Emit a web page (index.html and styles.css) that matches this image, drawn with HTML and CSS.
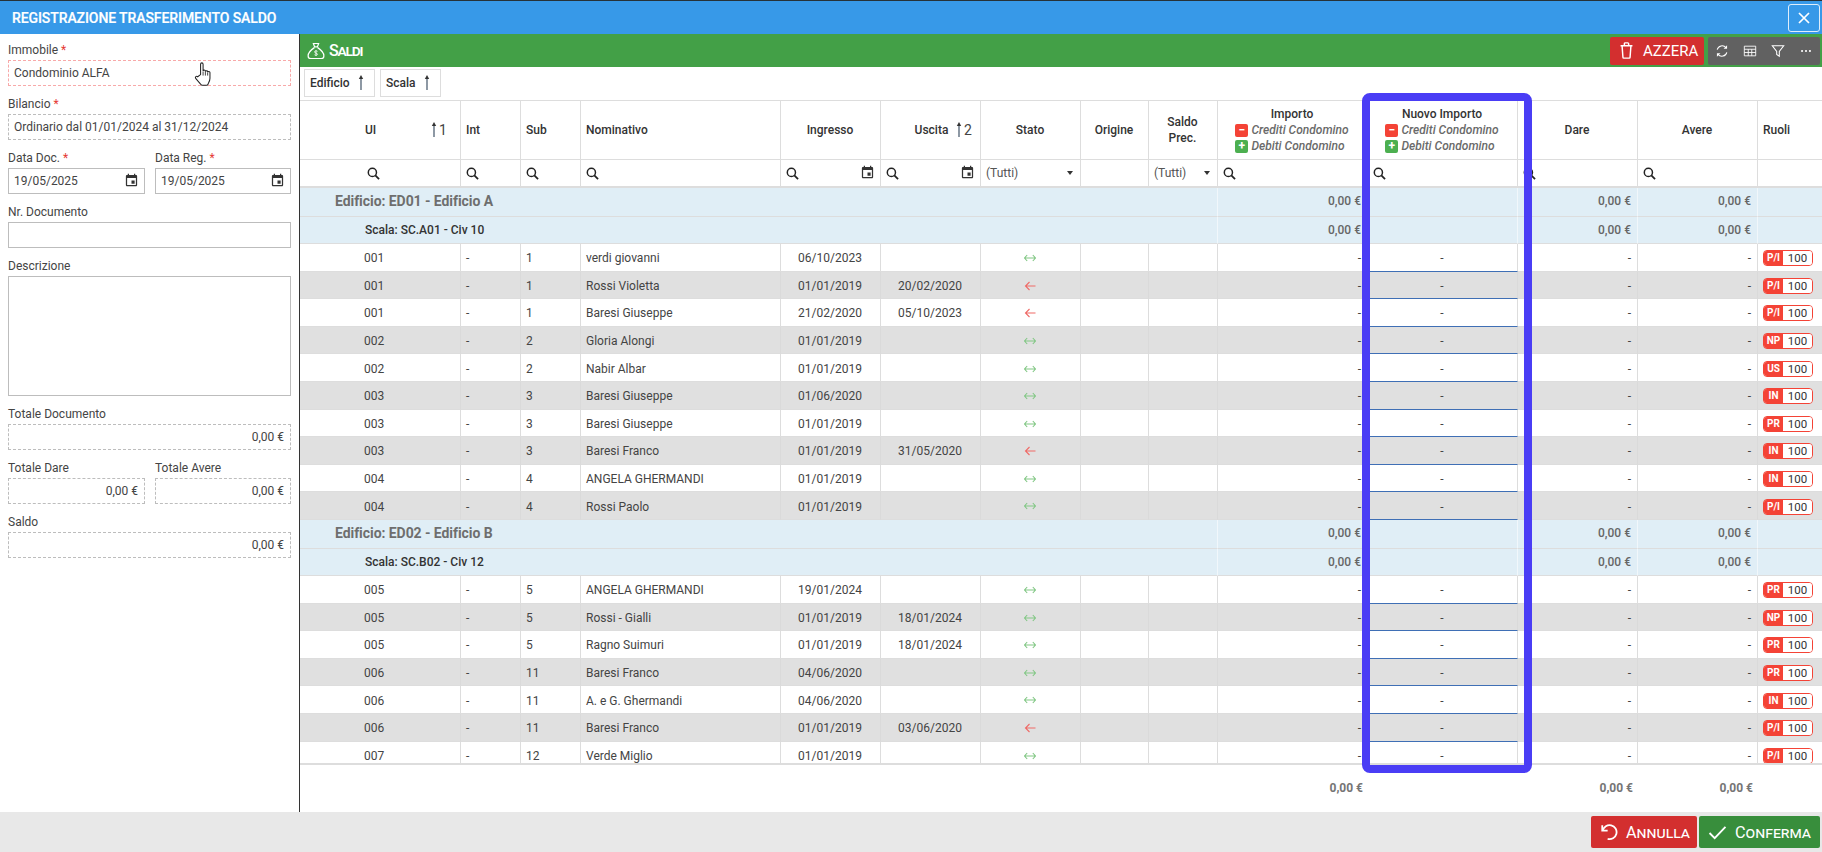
FILE: index.html
```html
<!DOCTYPE html>
<html lang="it">
<head>
<meta charset="utf-8">
<title>Registrazione trasferimento saldo</title>
<link rel="stylesheet" href="styles.css">
</head>
<body>
<svg class="defs" xmlns="http://www.w3.org/2000/svg">
  <symbol id="i-search" viewBox="0 0 14 14"><circle cx="5.8" cy="5.8" r="4.4" fill="none" stroke="currentColor" stroke-width="1.6"/><path d="M9 9l4 4" stroke="currentColor" stroke-width="1.9" fill="none"/></symbol>
  <symbol id="i-cal" viewBox="0 0 24 24"><path fill="currentColor" d="M17 12h-5v5h5v-5zM16 1v2H8V1H6v2H5c-1.11 0-1.99.9-1.99 2L3 19c0 1.1.89 2 2 2h14c1.1 0 2-.9 2-2V5c0-1.1-.9-2-2-2h-1V1h-2zm3 18H5V8h14v11z"/></symbol>
  <symbol id="i-both" viewBox="0 0 12 8"><path d="M.5 4h11M3.200 1L.5 4l2.700 3M8.800 1l2.700 3-2.700 3" fill="none" stroke="#81c784" stroke-width="1.100"/></symbol>
  <symbol id="i-left" viewBox="0 0 12 10"><path d="M1.500 5h10M5.500 1L1.500 5l4 4" fill="none" stroke="#ef6a66" stroke-width="1.100"/></symbol>
  <symbol id="i-up" viewBox="0 0 6 16"><path d="M3 15V2" stroke="#5d6d7e" stroke-width="1.400" fill="none"/><path d="M3 0L5.200 4H.8z" fill="#333"/></symbol>
</svg>

<div class="app">
  <header class="titlebar">
    <h1 class="title">REGISTRAZIONE TRASFERIMENTO SALDO</h1>
    <button class="close" type="button" aria-label="Chiudi">
      <svg class="close-ic" viewBox="0 0 12 12"><path d="M1 1l10 10M11 1L1 11" stroke="#fff" stroke-width="1.700" fill="none"/></svg>
    </button>
  </header>

  <div class="main">
    <aside class="form">
      <div class="field"><div class="lbl">Immobile <span class="req">*</span></div><div class="inp dash-red">Condominio ALFA</div></div>
      <div class="field"><div class="lbl">Bilancio <span class="req">*</span></div><div class="inp dash">Ordinario dal 01/01/2024 al 31/12/2024</div></div>
      <div class="two">
        <div class="field"><div class="lbl">Data Doc. <span class="req">*</span></div><div class="inp solid date">19/05/2025<svg class="cal"><use href="#i-cal"/></svg></div></div>
        <div class="field"><div class="lbl">Data Reg. <span class="req">*</span></div><div class="inp solid date">19/05/2025<svg class="cal"><use href="#i-cal"/></svg></div></div>
      </div>
      <div class="field"><div class="lbl">Nr. Documento</div><div class="inp solid"></div></div>
      <div class="field"><div class="lbl">Descrizione</div><div class="inp solid area"></div></div>
      <div class="field"><div class="lbl">Totale Documento</div><div class="inp dash num">0,00 €</div></div>
      <div class="two">
        <div class="field"><div class="lbl">Totale Dare</div><div class="inp dash num">0,00 €</div></div>
        <div class="field"><div class="lbl">Totale Avere</div><div class="inp dash num">0,00 €</div></div>
      </div>
      <div class="field"><div class="lbl">Saldo</div><div class="inp dash num">0,00 €</div></div>
      <svg class="hand" viewBox="0 0 18 24"><path d="M6.200 13V3c0-1.600 2.400-1.600 2.400 0v6.600c0-1.300 2.200-1.300 2.200 0v.6c0-1.200 2.200-1.200 2.200 0v.7c0-1.100 2.200-1.100 2.200.2v5.400c0 2.800-1.400 4.300-1.900 5.800-.2.6-.5.9-1.200.9H7.800c-.7 0-1.100-.3-1.500-.9-1.200-1.800-3-3.300-4.800-5.600-.9-1.200.6-2.700 1.900-1.600z" fill="#fff" stroke="#222" stroke-width="1"/><path d="M8.600 10v4M10.800 10.400V14M13 11v3" stroke="#222" stroke-width=".8" fill="none"/></svg>
    </aside>

    <section class="panel">
      <div class="greenbar">
        <div class="panel-title">
          <svg class="bag" viewBox="0 0 24 24"><path d="M8.500 2h7l-1.700 4.500h-3.600zM9.500 6.500h5M9.800 7.500C6 10 1.500 14.500 1.500 18.500c0 2 1.500 3.500 3.500 3.500h14c2 0 3.500-1.500 3.500-3.500C22.500 14.500 18 10 14.200 7.500" fill="none" stroke="#fff" stroke-width="1.600"/><path d="M14 12.500c-1-1-4-1-4 .8s4 1.200 4 3c0 1.700-3 1.700-4 .7M12 11v7.500" fill="none" stroke="#fff" stroke-width="1.100"/></svg>
          <span class="ptext">Saldi</span>
        </div>
        <div class="tools">
          <button class="btn-azzera" type="button">
            <svg class="trash" viewBox="0 0 16 20"><path d="M1 4.500h14M5.500 4.500V2a1 1 0 0 1 1-1h3a1 1 0 0 1 1 1v2.500M2.800 4.500l1 13.500a1 1 0 0 0 1 1h6.400a1 1 0 0 0 1-1l1-13.500" fill="none" stroke="#fff" stroke-width="1.700"/></svg>
            AZZERA
          </button>
          <div class="toolset">
            <svg class="tool" viewBox="0 0 16 16"><path d="M2.500 6.500A5.700 5.700 0 0 1 12.600 4.300M13.500 9.500A5.700 5.700 0 0 1 3.400 11.700" fill="none" stroke="#fff" stroke-width="1.200"/><path d="M13.800 1.500v4h-4zM2.200 14.500v-4h4z" fill="#fff"/></svg>
            <svg class="tool" viewBox="0 0 16 16"><path d="M1.500 2.500h13v11h-13zM1.500 6h13M1.500 9.700h13M6 6v7.500M10 6v7.500" fill="none" stroke="#fff" stroke-width="1"/></svg>
            <svg class="tool" viewBox="0 0 16 16"><path d="M1.500 2h13L9.500 8.500V14l-3-2V8.500z" fill="none" stroke="#fff" stroke-width="1.200"/></svg>
            <svg class="tool" viewBox="0 0 16 16"><circle cx="3.500" cy="8" r="1.200" fill="#fff"/><circle cx="8" cy="8" r="1.200" fill="#fff"/><circle cx="12.500" cy="8" r="1.200" fill="#fff"/></svg>
          </div>
        </div>
      </div>

      <div class="chips">
        <div class="chip">Edificio <svg class="up"><use href="#i-up"/></svg></div>
        <div class="chip">Scala <svg class="up"><use href="#i-up"/></svg></div>
      </div>

      <div class="gridwrap">
        <table class="grid">
          <colgroup>
            <col class="c-ui"><col class="c-60"><col class="c-60"><col class="c-200"><col class="c-100"><col class="c-100"><col class="c-100"><col class="c-68"><col class="c-69"><col class="c-150"><col class="c-150"><col class="c-120"><col class="c-120"><col class="c-ruoli">
          </colgroup>
          <thead>
            <tr class="hrow">
              <th class="h-ui"><span class="uil">UI</span><span class="sort sort-ui"><svg class="up"><use href="#i-up"/></svg>1</span></th>
              <th class="l">Int</th>
              <th class="l">Sub</th>
              <th class="l">Nominativo</th>
              <th>Ingresso</th>
              <th class="h-rel">Uscita<span class="sort sort-us"><svg class="up"><use href="#i-up"/></svg>2</span></th>
              <th>Stato</th>
              <th>Origine</th>
              <th>Saldo<br>Prec.</th>
              <th><div class="h3">Importo</div><div class="legend"><div class="lg"><span class="sq minus">−</span>Crediti Condomino</div><div class="lg"><span class="sq plus">+</span>Debiti Condomino</div></div></th>
              <th><div class="h3">Nuovo Importo</div><div class="legend"><div class="lg"><span class="sq minus">−</span>Crediti Condomino</div><div class="lg"><span class="sq plus">+</span>Debiti Condomino</div></div></th>
              <th>Dare</th>
              <th>Avere</th>
              <th class="l">Ruoli</th>
            </tr>
            <tr class="frow">
              <td class="f-ui"><svg class="s"><use href="#i-search"/></svg></td>
              <td><svg class="s"><use href="#i-search"/></svg></td>
              <td><svg class="s"><use href="#i-search"/></svg></td>
              <td><svg class="s"><use href="#i-search"/></svg></td>
              <td><div class="fdate"><svg class="s"><use href="#i-search"/></svg><svg class="cal fcal"><use href="#i-cal"/></svg></div></td>
              <td><div class="fdate"><svg class="s"><use href="#i-search"/></svg><svg class="cal fcal"><use href="#i-cal"/></svg></div></td>
              <td><div class="fsel">(Tutti)<span class="caret"></span></div></td>
              <td></td>
              <td><div class="fsel">(Tutti)<span class="caret"></span></div></td>
              <td><svg class="s"><use href="#i-search"/></svg></td>
              <td><svg class="s"><use href="#i-search"/></svg></td>
              <td><svg class="s"><use href="#i-search"/></svg></td>
              <td><svg class="s"><use href="#i-search"/></svg></td>
              <td></td>
            </tr>
          </thead>
          <tbody>
            <tr class="g1"><td colspan="9" class="g-ed">Edificio: ED01 - Edificio A</td><td class="r">0,00 €</td><td></td><td class="r">0,00 €</td><td class="r">0,00 €</td><td></td></tr>
            <tr class="g2"><td colspan="9" class="g-sc">Scala: SC.A01 - Civ 10</td><td class="r">0,00 €</td><td></td><td class="r">0,00 €</td><td class="r">0,00 €</td><td></td></tr>
            <tr class="d"><td class="ui">001</td><td>-</td><td>1</td><td>verdi giovanni</td><td class="c">06/10/2023</td><td class="c"></td><td class="c"><svg class="st"><use href="#i-both"/></svg></td><td></td><td></td><td class="r">-</td><td class="c nv">-</td><td class="r">-</td><td class="r">-</td><td><span class="role"><span class="rk">P/I</span><span class="rv">100</span></span></td></tr>
            <tr class="d alt"><td class="ui">001</td><td>-</td><td>1</td><td>Rossi Violetta</td><td class="c">01/01/2019</td><td class="c">20/02/2020</td><td class="c"><svg class="st"><use href="#i-left"/></svg></td><td></td><td></td><td class="r">-</td><td class="c nv">-</td><td class="r">-</td><td class="r">-</td><td><span class="role"><span class="rk">P/I</span><span class="rv">100</span></span></td></tr>
            <tr class="d"><td class="ui">001</td><td>-</td><td>1</td><td>Baresi Giuseppe</td><td class="c">21/02/2020</td><td class="c">05/10/2023</td><td class="c"><svg class="st"><use href="#i-left"/></svg></td><td></td><td></td><td class="r">-</td><td class="c nv">-</td><td class="r">-</td><td class="r">-</td><td><span class="role"><span class="rk">P/I</span><span class="rv">100</span></span></td></tr>
            <tr class="d alt"><td class="ui">002</td><td>-</td><td>2</td><td>Gloria Alongi</td><td class="c">01/01/2019</td><td class="c"></td><td class="c"><svg class="st"><use href="#i-both"/></svg></td><td></td><td></td><td class="r">-</td><td class="c nv">-</td><td class="r">-</td><td class="r">-</td><td><span class="role"><span class="rk">NP</span><span class="rv">100</span></span></td></tr>
            <tr class="d"><td class="ui">002</td><td>-</td><td>2</td><td>Nabir Albar</td><td class="c">01/01/2019</td><td class="c"></td><td class="c"><svg class="st"><use href="#i-both"/></svg></td><td></td><td></td><td class="r">-</td><td class="c nv">-</td><td class="r">-</td><td class="r">-</td><td><span class="role"><span class="rk">US</span><span class="rv">100</span></span></td></tr>
            <tr class="d alt"><td class="ui">003</td><td>-</td><td>3</td><td>Baresi Giuseppe</td><td class="c">01/06/2020</td><td class="c"></td><td class="c"><svg class="st"><use href="#i-both"/></svg></td><td></td><td></td><td class="r">-</td><td class="c nv">-</td><td class="r">-</td><td class="r">-</td><td><span class="role"><span class="rk">IN</span><span class="rv">100</span></span></td></tr>
            <tr class="d"><td class="ui">003</td><td>-</td><td>3</td><td>Baresi Giuseppe</td><td class="c">01/01/2019</td><td class="c"></td><td class="c"><svg class="st"><use href="#i-both"/></svg></td><td></td><td></td><td class="r">-</td><td class="c nv">-</td><td class="r">-</td><td class="r">-</td><td><span class="role"><span class="rk">PR</span><span class="rv">100</span></span></td></tr>
            <tr class="d alt"><td class="ui">003</td><td>-</td><td>3</td><td>Baresi Franco</td><td class="c">01/01/2019</td><td class="c">31/05/2020</td><td class="c"><svg class="st"><use href="#i-left"/></svg></td><td></td><td></td><td class="r">-</td><td class="c nv">-</td><td class="r">-</td><td class="r">-</td><td><span class="role"><span class="rk">IN</span><span class="rv">100</span></span></td></tr>
            <tr class="d"><td class="ui">004</td><td>-</td><td>4</td><td>ANGELA GHERMANDI</td><td class="c">01/01/2019</td><td class="c"></td><td class="c"><svg class="st"><use href="#i-both"/></svg></td><td></td><td></td><td class="r">-</td><td class="c nv">-</td><td class="r">-</td><td class="r">-</td><td><span class="role"><span class="rk">IN</span><span class="rv">100</span></span></td></tr>
            <tr class="d alt"><td class="ui">004</td><td>-</td><td>4</td><td>Rossi Paolo</td><td class="c">01/01/2019</td><td class="c"></td><td class="c"><svg class="st"><use href="#i-both"/></svg></td><td></td><td></td><td class="r">-</td><td class="c nv">-</td><td class="r">-</td><td class="r">-</td><td><span class="role"><span class="rk">P/I</span><span class="rv">100</span></span></td></tr>
            <tr class="g1"><td colspan="9" class="g-ed">Edificio: ED02 - Edificio B</td><td class="r">0,00 €</td><td></td><td class="r">0,00 €</td><td class="r">0,00 €</td><td></td></tr>
            <tr class="g2"><td colspan="9" class="g-sc">Scala: SC.B02 - Civ 12</td><td class="r">0,00 €</td><td></td><td class="r">0,00 €</td><td class="r">0,00 €</td><td></td></tr>
            <tr class="d"><td class="ui">005</td><td>-</td><td>5</td><td>ANGELA GHERMANDI</td><td class="c">19/01/2024</td><td class="c"></td><td class="c"><svg class="st"><use href="#i-both"/></svg></td><td></td><td></td><td class="r">-</td><td class="c nv">-</td><td class="r">-</td><td class="r">-</td><td><span class="role"><span class="rk">PR</span><span class="rv">100</span></span></td></tr>
            <tr class="d alt"><td class="ui">005</td><td>-</td><td>5</td><td>Rossi - Gialli</td><td class="c">01/01/2019</td><td class="c">18/01/2024</td><td class="c"><svg class="st"><use href="#i-both"/></svg></td><td></td><td></td><td class="r">-</td><td class="c nv">-</td><td class="r">-</td><td class="r">-</td><td><span class="role"><span class="rk">NP</span><span class="rv">100</span></span></td></tr>
            <tr class="d"><td class="ui">005</td><td>-</td><td>5</td><td>Ragno Suimuri</td><td class="c">01/01/2019</td><td class="c">18/01/2024</td><td class="c"><svg class="st"><use href="#i-both"/></svg></td><td></td><td></td><td class="r">-</td><td class="c nv">-</td><td class="r">-</td><td class="r">-</td><td><span class="role"><span class="rk">PR</span><span class="rv">100</span></span></td></tr>
            <tr class="d alt"><td class="ui">006</td><td>-</td><td>11</td><td>Baresi Franco</td><td class="c">04/06/2020</td><td class="c"></td><td class="c"><svg class="st"><use href="#i-both"/></svg></td><td></td><td></td><td class="r">-</td><td class="c nv">-</td><td class="r">-</td><td class="r">-</td><td><span class="role"><span class="rk">PR</span><span class="rv">100</span></span></td></tr>
            <tr class="d"><td class="ui">006</td><td>-</td><td>11</td><td>A. e G. Ghermandi</td><td class="c">04/06/2020</td><td class="c"></td><td class="c"><svg class="st"><use href="#i-both"/></svg></td><td></td><td></td><td class="r">-</td><td class="c nv">-</td><td class="r">-</td><td class="r">-</td><td><span class="role"><span class="rk">IN</span><span class="rv">100</span></span></td></tr>
            <tr class="d alt"><td class="ui">006</td><td>-</td><td>11</td><td>Baresi Franco</td><td class="c">01/01/2019</td><td class="c">03/06/2020</td><td class="c"><svg class="st"><use href="#i-left"/></svg></td><td></td><td></td><td class="r">-</td><td class="c nv">-</td><td class="r">-</td><td class="r">-</td><td><span class="role"><span class="rk">P/I</span><span class="rv">100</span></span></td></tr>
            <tr class="d"><td class="ui">007</td><td>-</td><td>12</td><td>Verde Miglio</td><td class="c">01/01/2019</td><td class="c"></td><td class="c"><svg class="st"><use href="#i-both"/></svg></td><td></td><td></td><td class="r">-</td><td class="c nv">-</td><td class="r">-</td><td class="r">-</td><td><span class="role"><span class="rk">P/I</span><span class="rv">100</span></span></td></tr>
          </tbody>
        </table>
      </div>

      <div class="totals">
        <span></span>
        <span class="tot">0,00 €</span>
        <span></span>
        <span class="tot">0,00 €</span>
        <span class="tot">0,00 €</span>
        <span></span>
      </div>

      <div class="highlight"></div>
    </section>
  </div>

  <footer class="actions">
    <button class="act act-red" type="button">
      <svg class="act-ic" viewBox="0 0 20 20"><path d="M2.500 2.500v6h6" fill="none" stroke="#fff" stroke-width="2"/><path d="M3 8.500A7.800 7.800 0 1 1 8.500 17.700" fill="none" stroke="#fff" stroke-width="2"/></svg>
      <span>Annulla</span>
    </button>
    <button class="act act-green" type="button">
      <svg class="act-ic ck" viewBox="0 0 20 16"><path d="M1.500 8.500l5.500 5.500L18.500 2" fill="none" stroke="#fff" stroke-width="2"/></svg>
      <span>Conferma</span>
    </button>
  </footer>
</div>
</body>
</html>
```

FILE: styles.css
```css
* { box-sizing: border-box; }
html, body { margin: 0; padding: 0; height: 100%; }
body { font-family: Roboto, "Liberation Sans", sans-serif; font-size: 12px; color: #333; background: #fff; overflow: hidden; }
.defs { display: none; }
.app { display: flex; flex-direction: column; height: 852px; width: 1822px; }

/* title bar */
.titlebar { flex: 0 0 34px; display: flex; align-items: center; justify-content: space-between; background: #3799e8; border-top: 1px solid #263238; padding: 0 2px 0 12px; }
.title { margin: 0; font-size: 14px; font-weight: 500; letter-spacing: -0.09px; color: #fff; -webkit-text-stroke: 0.2px #fff; }
.close { width: 32px; height: 28px; padding: 0; display: flex; align-items: center; justify-content: center; background: transparent; border: 1px solid #dfeefb; border-radius: 3px; }
.close-ic { width: 12px; height: 12px; }

.main { flex: 1 1 auto; display: flex; min-height: 0; }

/* left form */
.form { position: relative; flex: 0 0 300px; border-right: 1px solid #333; padding: 7px 8px 0; display: flex; flex-direction: column; gap: 9px; }
.two { display: grid; grid-template-columns: 137px 136px; gap: 10px; }
.lbl { height: 16px; line-height: 18px; margin-bottom: 3px; color: #444; font-size: 12px; }
.req { color: #e53935; }
.inp { height: 26px; line-height: 24px; padding: 0 6px 0 5px; font-size: 12px; color: #444; background: #fff; }
.solid { border: 1px solid #bdbdbd; }
.dash { border: 1px dashed #bdbdbd; }
.dash-red { border: 1px dashed #f8a9a9; }
.area { height: 120px; }
.num { text-align: right; }
.date { display: flex; align-items: center; justify-content: space-between; padding-right: 5px; }
.cal { width: 15px; height: 15px; color: #333; flex: none; margin-bottom: 1px; }
.hand { position: absolute; left: 194px; top: 27px; width: 19px; height: 25px; }

/* right panel */
.panel { position: relative; flex: 1 1 auto; min-width: 0; display: flex; flex-direction: column; }
.greenbar { flex: 0 0 33px; background: #43a047; display: flex; align-items: center; justify-content: space-between; padding: 0 2px 0 7px; }
.panel-title { display: flex; align-items: center; gap: 4px; color: #fff; }
.ptext { font-size: 16px; font-weight: 500; font-variant: small-caps; letter-spacing: -1.2px; }
.bag { width: 18px; height: 18px; }
.tools { display: flex; gap: 4px; height: 28px; }
.btn-azzera { display: flex; align-items: center; gap: 9px; width: 94px; padding: 0 0 0 9px; background: #d32f2f; color: #fff; border: 0; border-radius: 2px; font-family: inherit; font-size: 15px; }
.trash { width: 15px; height: 17px; flex: none; }
.toolset { width: 112px; display: flex; align-items: center; justify-content: space-between; padding: 0 7px; background: #616161; border-radius: 2px; }
.tool { width: 14px; height: 14px; }

.chips { flex: 0 0 33px; display: flex; gap: 5px; padding: 2px 0 3px 4px; }
.chip { display: flex; align-items: center; justify-content: space-between; padding: 0 10px 0 5px; height: 28px; border: 1px solid #ddd; font-weight: 500; color: #333; }
.chip:first-child { width: 71px; }
.chip:nth-child(2) { width: 61px; }
.up { width: 6px; height: 16px; flex: none; }

/* grid */
.gridwrap { flex: 0 0 665px; overflow: hidden; border-bottom: 2px solid #ddd; }
.grid { table-layout: fixed; width: 1522px; border-collapse: separate; border-spacing: 0; font-size: 12px; }
.c-ui { width: 161px; }
.c-60 { width: 60px; }
.c-200 { width: 200px; }
.c-100 { width: 100px; }
.c-68 { width: 68px; }
.c-69 { width: 69px; }
.c-150 { width: 150px; }
.c-120 { width: 120px; }
.c-ruoli { width: 64px; }
.grid th, .grid td { border-right: 1px solid #ddd; border-bottom: 1px solid #ddd; padding: 0 6px 0 5px; vertical-align: middle; overflow: hidden; white-space: nowrap; }
.grid th:last-child, .grid td:last-child { border-right: 0; }
.hrow th { height: 60px; border-top: 1px solid #ddd; font-weight: 500; color: #333; text-align: center; line-height: 16px; position: relative; }
.grid th.l { text-align: left; }
.grid th.h-ui { text-align: left; padding-left: 65px; }
.sort { position: absolute; top: 21px; display: flex; align-items: center; gap: 2px; font-size: 14px; font-weight: 400; color: #444; }
.sort-ui { left: 131px; }
.sort-us { left: 75px; }
.grid th.h-rel { text-align: center; padding-left: 8px; padding-bottom: 1px; }
.h3 { font-weight: 500; }
.legend { display: inline-block; text-align: left; font-style: italic; font-weight: 500; color: #6a6a6a; }
.lg { display: flex; align-items: center; gap: 3px; height: 16px; }
.sq { display: inline-flex; align-items: center; justify-content: center; width: 13px; height: 13px; border-radius: 2px; color: #fff; font-style: normal; font-weight: 700; font-size: 12px; line-height: 1; }
.minus { background: #f44336; }
.plus { background: #4caf50; }

.frow td { height: 28px; border-bottom: 2px solid #ddd; padding-top: 1px; }
.grid .f-ui { padding-left: 67px; }
.s { width: 13px; height: 13px; color: #222; display: block; }
.fdate { display: flex; align-items: center; justify-content: space-between; margin-right: -1px; }
.fcal { margin-bottom: 2px; }
.fsel { position: relative; color: #555; padding-bottom: 2px; }
.caret { position: absolute; right: 1px; top: 5px; width: 0; height: 0; border: 3.5px solid transparent; border-top: 4px solid #333; border-bottom: 0; }

.g1 td, .g2 td { background: #e0eef6; border-right-color: #f1f7fb; color: #666; font-weight: 500; }
.g1 td { height: 29px; padding-bottom: 2px; }
.g2 td { height: 27px; }
.grid .g-ed { padding-left: 35px; font-size: 14px; font-weight: 700; letter-spacing: -0.06px; color: #6e6e6e; }
.grid .g-sc { padding-left: 65px; color: #333; }

.d td { height: 27.6px; color: #444; padding-top: 2px; }
.alt td { background: #e0e0e0; border-right-color: #dadada; }
.grid .ui { padding-left: 64px; }
.c { text-align: center; }
.r { text-align: right; }
.grid .nv { border-bottom: 1px solid #3f6fb5; }
.st { width: 12px; height: 10px; display: inline-block; vertical-align: middle; margin-bottom: 2px; }

.role { display: flex; width: 50px; height: 16px; border: 1px solid #f44336; border-radius: 4px; overflow: hidden; font-size: 11px; line-height: 14px; }
.rk { flex: 0 0 19px; background: #f44336; color: #fff; font-weight: 700; font-size: 10px; text-align: center; }
.rv { flex: 1; background: #fff; color: #333; text-align: center; font-size: 11.5px; }

/* totals */
.totals { flex: 1 1 auto; display: grid; grid-template-columns: 918px 150px 150px 120px 120px 64px; align-items: center; padding-bottom: 2px; }
.tot { text-align: right; padding-right: 5px; font-weight: 700; color: #757575; }

/* highlight box */
.highlight { position: absolute; left: 1062px; top: 59px; width: 170px; height: 680px; border: 8px solid #4a3df5; border-radius: 8px; pointer-events: none; }

/* footer */
.actions { flex: 0 0 40px; display: flex; align-items: center; justify-content: flex-end; gap: 2px; padding-right: 2px; background: #e8e8e8; }
.act { height: 32px; display: flex; align-items: center; border: 0; border-radius: 2px; color: #fff; font-family: inherit; font-size: 16.3px; font-variant: small-caps; padding: 0; }
.act-red { width: 106px; background: #d32f2f; gap: 8px; padding-left: 9px; }
.act-green { width: 121px; background: #388e3c; gap: 8px; padding-left: 9px; }
.act-ic { width: 18px; height: 18px; flex: none; }
.act-ic.ck { width: 19px; height: 15px; }
```
